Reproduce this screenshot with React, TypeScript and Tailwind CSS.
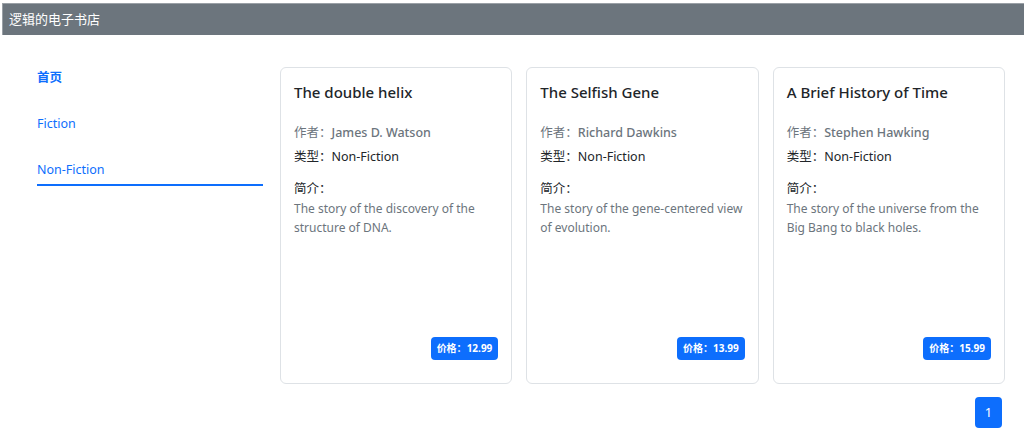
const books = [
  {
    title: "The double helix",
    author: "James D. Watson",
    type: "Non-Fiction",
    desc: "The story of the discovery of the structure of DNA.",
    price: "12.99",
  },
  {
    title: "The Selfish Gene",
    author: "Richard Dawkins",
    type: "Non-Fiction",
    desc: "The story of the gene-centered view of evolution.",
    price: "13.99",
  },
  {
    title: "A Brief History of Time",
    author: "Stephen Hawking",
    type: "Non-Fiction",
    desc: "The story of the universe from the Big Bang to black holes.",
    price: "15.99",
  },
];

function BookCard({ book }: { book: (typeof books)[number] }) {
  return (
    <div className="flex h-[317px] flex-col rounded-md border border-[#dee2e6] bg-white px-[13px] pb-[23px] pt-[12px]">
      <h2 className="text-[15px] font-medium leading-[24px] text-[#212529]">{book.title}</h2>
      <p className="mt-[17px] text-[12.5px] leading-[24px] text-[#6c757d]">
        作者：<span className="font-medium">{book.author}</span>
      </p>
      <p className="text-[12.5px] leading-[24px] text-[#212529]">类型：{book.type}</p>
      <p className="mt-[10px] text-[12.5px] leading-[19px] text-[#212529]">简介：</p>
      <p className="mt-px text-[12px] leading-[19px] text-[#6c757d]">{book.desc}</p>
      <div className="mt-auto flex justify-end">
        <span className="rounded-[4px] bg-[#0d6efd] px-[6px] py-[4px] text-[10px] font-bold leading-[15px] text-white">
          价格：{book.price}
        </span>
      </div>
    </div>
  );
}

export default function App() {
  return (
    <div className="min-h-[435px] bg-white pt-[3px] font-['Noto_Sans','Noto_Sans_CJK_SC',sans-serif]">
      <header className="ml-[2px] flex h-[32px] items-center border-l border-t border-[#9aa0a6] bg-[#6c757d] px-[6px] text-[13px] text-white">
        逻辑的电子书店
      </header>
      <div className="flex gap-[17px] pl-[37px] pr-[19px] pt-[32px]">
        <nav className="flex w-[226px] shrink-0 flex-col text-[12.5px] text-[#0d6efd]">
          <a className="-mt-[10px] py-[11px] font-bold leading-[20px]">首页</a>
          <a className="mt-[5px] py-[10px] leading-[20px]">Fiction</a>
          <a className="mt-[6px] py-[10px] pb-[4px] leading-[20px]">Non-Fiction</a>
          <div className="h-[1.5px] bg-[#0d6efd]" />
        </nav>
        <main className="flex-1">
          <div className="grid grid-cols-3 gap-[14px]">
            {books.map((b) => (
              <BookCard key={b.title} book={b} />
            ))}
          </div>
          <div className="mt-[13px] flex justify-end pr-[3px]">
            <span className="flex h-[31px] w-[27px] items-center justify-center rounded-[4px] bg-[#0d6efd] text-[13px] text-white">
              1
            </span>
          </div>
        </main>
      </div>
    </div>
  );
}
